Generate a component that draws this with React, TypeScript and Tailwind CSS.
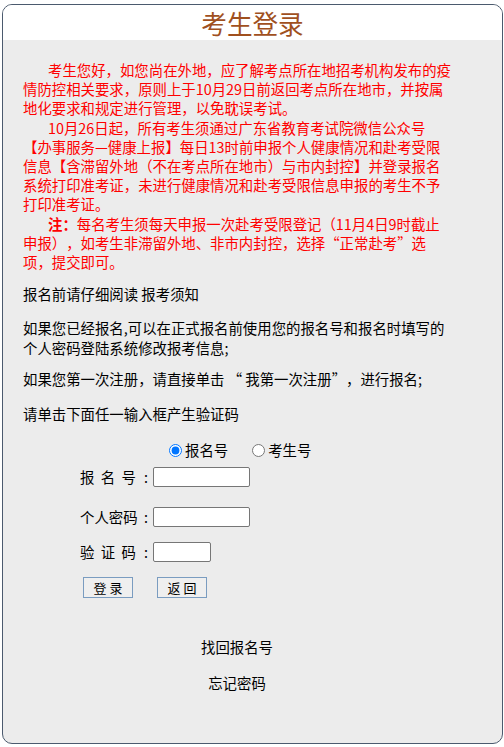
import React from "react";

const font = { fontFamily: '"Microsoft YaHei", "Noto Sans CJK SC", "Noto Sans", sans-serif' };

function Label({ chars }: { chars: string[] }) {
  return (
    <div className="flex items-center w-[73px] h-[20px] text-[14.4px] leading-[20px] text-black">
      <div className="flex justify-between w-[56px]">
        {chars.map((c, i) => (
          <span key={i}>{c}</span>
        ))}
      </div>
      <span className="ml-[8px]">:</span>
    </div>
  );
}

export default function App() {
  return (
    <div className="pt-[4px] pl-[2px] [text-spacing-trim:space-all]" style={font}>
      <div className="w-[501px] h-[740px] border border-[#4b5a6e] rounded-[10px] overflow-hidden bg-[#ececec] flex flex-col">
        <div className="bg-white h-[35px] flex items-center justify-center text-[25.6px] text-[#a0501e] leading-[35px]">
          考生登录
        </div>
        <div className="pl-[20px] w-[448px] flex flex-col">
          <div className="mt-[20px] text-[14.4px] leading-[19.2px] text-[#ff0000]">
            <p className="indent-[25px]">
              考生您好，如您尚在外地，应了解考点所在地招考机构发布的疫情防控相关要求，原则上于10月29日前返回考点所在地市，并按属地化要求和规定进行管理，以免耽误考试。
            </p>
            <p className="indent-[25px]">
              10月26日起，所有考生须通过广东省教育考试院微信公众号【办事服务—健康上报】每日13时前申报个人健康情况和赴考受限信息【含滞留外地（不在考点所在地市）与市内封控】并登录报名系统打印准考证，未进行健康情况和赴考受限信息申报的考生不予打印准考证。
            </p>
            <p className="indent-[25px]">
              <b>注：</b>每名考生须每天申报一次赴考受限登记（11月4日9时截止申报），如考生非滞留外地、非市内封控，选择“正常赴考”选项，提交即可。
            </p>
          </div>
          <p className="mt-[13px] text-[14.4px] leading-[19.2px] text-black">报名前请仔细阅读 报考须知</p>
          <p className="mt-[15px] text-[14.4px] leading-[19.2px] text-black">
            如果您已经报名,可以在正式报名前使用您的报名号和报名时填写的个人密码登陆系统修改报考信息;
          </p>
          <p className="mt-[12px] text-[14.4px] leading-[19.2px] text-black">
            如果您第一次注册，请直接单击 “ 我第一次注册”，进行报名;
          </p>
          <p className="mt-[16px] text-[14.4px] leading-[19.2px] text-black">请单击下面任一输入框产生验证码</p>

          <div className="mt-[17px] h-[20px] flex items-center pl-[146px] text-[14.4px] leading-[20px] text-black">
            <label className="flex items-center">
              <input type="radio" name="t" defaultChecked className="w-[13px] h-[13px] m-0 mr-[3px]" />
              <span>报名号</span>
            </label>
            <label className="flex items-center ml-[24px]">
              <input type="radio" name="t" className="w-[13px] h-[13px] m-0 mr-[3px]" />
              <span>考生号</span>
            </label>
          </div>

          <div className="mt-[7px] h-[20px] flex items-center pl-[57px]">
            <Label chars={["报", "名", "号"]} />
            <input className="w-[97px] h-[20px] bg-white border border-[#767676] rounded-[2px]" />
          </div>
          <div className="mt-[20px] h-[20px] flex items-center pl-[57px]">
            <Label chars={["个", "人", "密", "码"]} />
            <input className="w-[97px] h-[20px] bg-white border border-[#767676] rounded-[2px]" />
          </div>
          <div className="mt-[15px] h-[20px] flex items-center pl-[57px]">
            <Label chars={["验", "证", "码"]} />
            <input className="w-[58px] h-[20px] bg-white border border-[#767676] rounded-[2px]" />
          </div>
          <div className="mt-[15px] h-[21px] flex items-center pl-[60px] gap-[24px]">
            <button className="w-[50px] h-[21px] border border-[#7a9cc0] bg-[#efefef] text-[13px] leading-none text-black">
              登 录
            </button>
            <button className="w-[50px] h-[21px] border border-[#7a9cc0] bg-[#efefef] text-[13px] leading-none text-black">
              返 回
            </button>
          </div>

          <p className="mt-[39px] text-center text-[14.4px] leading-[19.2px] text-black">找回报名号</p>
          <p className="mt-[17px] text-center text-[14.4px] leading-[19.2px] text-black">忘记密码</p>
        </div>
      </div>
    </div>
  );
}
